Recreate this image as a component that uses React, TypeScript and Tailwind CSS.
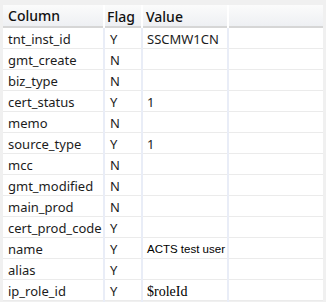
const ROWS: { col: string; flag: string; value?: string; kind?: "arial" | "serif" }[] = [
  { col: "tnt_inst_id", flag: "Y", value: "SSCMW1CN" },
  { col: "gmt_create", flag: "N" },
  { col: "biz_type", flag: "N" },
  { col: "cert_status", flag: "Y", value: "1" },
  { col: "memo", flag: "N" },
  { col: "source_type", flag: "Y", value: "1" },
  { col: "mcc", flag: "N" },
  { col: "gmt_modified", flag: "N" },
  { col: "main_prod", flag: "N" },
  { col: "cert_prod_code", flag: "Y" },
  { col: "name", flag: "Y", value: "ACTS test user", kind: "arial" },
  { col: "alias", flag: "Y" },
  { col: "ip_role_id", flag: "Y", value: "$roleId", kind: "serif" },
];

const grid = "grid grid-cols-[100px_2px_36px_2px_84px_2px_94px]";

function Divider() {
  return <div className="bg-[#e9edf7]" />;
}

export default function App() {
  return (
    <div className="w-[326px] h-[302px] bg-[#f0f0f0] pt-[5px] pl-[3px] overflow-hidden font-['Noto_Sans','Noto_Sans_CJK_SC',sans-serif] text-[#1c1c1c]">
      <div className="w-[320px] bg-white">
        {/* header */}
        <div className={`${grid} h-[23px] border-b-2 border-[#d6d6d6] bg-gradient-to-b from-[#fbfbfb] to-[#eef0f3] text-[14px] font-medium text-[#111]`}>
          <div className="pl-[5px] leading-[22px]">Column</div>
          <div className="bg-white" />
          <div className="pl-[2px] leading-[24px]">Flag</div>
          <div className="bg-white" />
          <div className="pl-[3px] leading-[24px]">Value</div>
          <div className="bg-white" />
          <div />
        </div>

        {ROWS.map((r) => (
          <div key={r.col} className={`${grid} h-[21px] border-b border-[#ebebeb] text-[13px] whitespace-nowrap`}>
            <div className="pl-[5px] pt-[1px] leading-[21px]">{r.col}</div>
            <Divider />
            <div className="pl-[5px] pt-[1px] leading-[21px]">{r.flag}</div>
            <Divider />
            <div
              className={
                r.kind === "arial"
                  ? "pl-[4px] pt-[1px] leading-[21px] font-['Liberation_Sans',Arial,sans-serif] text-[11.5px] text-black"
                  : r.kind === "serif"
                  ? "pl-[4px] pt-[1px] leading-[21px] font-['Liberation_Serif',serif] text-[14px] text-black"
                  : "pl-[4px] pt-[1px] leading-[21px]"
              }
            >
              {r.value ?? ""}
            </div>
            <Divider />
            <div />
          </div>
        ))}
      </div>
    </div>
  );
}
